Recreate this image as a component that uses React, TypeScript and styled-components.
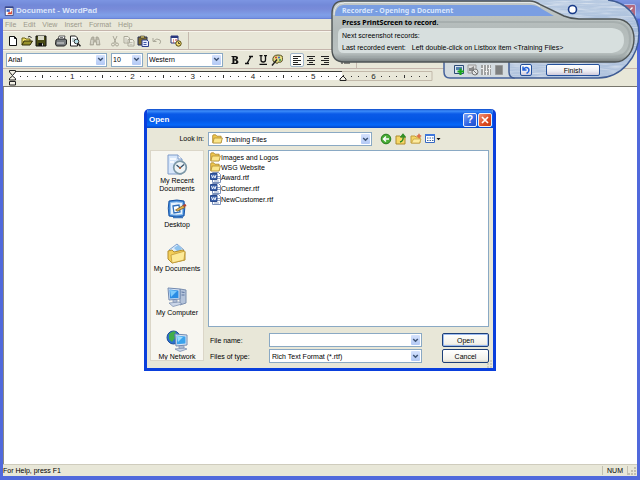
import React from "react";
import styled, { createGlobalStyle, css } from "styled-components";

const Global = createGlobalStyle`
  * { box-sizing: border-box; }
  html, body { margin: 0; height: 100%; }
  body { overflow: hidden; }
  body, button, input, select { font-family: "Liberation Sans", Arial, sans-serif; font-size: 7px; line-height: 9px; color: #000; }
  button, input, select { margin: 0; padding: 0; border: 0; background: none; border-radius: 0; }
`;

const face = "#e8e7d8";
const fieldLine = "#8aa9c4";

/* ---------- main window ---------- */
const Window = styled.main`
  min-height: 100vh;
  display: flex;
  flex-direction: column;
  background: ${face};
  border: solid #5069dc;
  border-width: 0 3px 4px;
`;
const TitleBar = styled.header`
  display: flex;
  align-items: center;
  gap: 2px;
  height: 19px;
  margin: 0 -3px;
  padding: 2px 4px 0;
  background: linear-gradient(#7c95e2 0, #7289d8 5px, #788bd9 9px, #7f9fe8 15px, #7693e2 18px, #5c74cf 19px);
`;
const WindowTitle = styled.h1`
  flex: 1;
  margin: 0;
  font-size: 8px;
  line-height: 10px;
  color: #dce6fb;
`;
const CloseGhost = styled.button`
  width: 13px;
  height: 13px;
  display: grid;
  place-items: center;
  border: 1px solid #b6bdea;
  border-radius: 2px;
  background: #b36a80;
`;
const MenuBar = styled.nav`
  display: flex;
  gap: 7px;
  height: 12px;
  padding: 0 2px;
  align-items: center;
  border-bottom: 1px solid #c5b5ac;
`;
const MenuButton = styled.button`
  color: #9b998b;
`;
const Bar = styled.div`
  display: flex;
  align-items: center;
  height: 19px;
  padding: 0 3px;
  border-top: 1px solid #f7f5ec;
  border-bottom: 1px solid #c5b5ac;
`;
const Group = styled.div<{ $after?: number }>`
  display: flex;
  margin-right: ${(p) => p.$after ?? 6}px;
`;
const Tool = styled.button<{ $on?: boolean; $size?: number }>`
  width: ${(p) => p.$size ?? 14}px;
  height: 14px;
  display: grid;
  place-items: center;
  ${(p) => p.$on && css`background: #fbfbf8; border: 1px solid #9fb4c8; border-radius: 2px;`}
  svg { display: block; }
`;
const Divider = styled.span`
  width: 1px;
  align-self: stretch;
  background: #c5b9ae;
`;
const RulerArea = styled.div`
  height: 18px;
  padding: 1px 0 0 5px;
  border-bottom: 1px solid #77756c;
  overflow: hidden;
  svg { display: block; }
`;
const Page = styled.section`
  flex: 1;
  background: #fff;
  border-left: 1px solid #8d8b80;
`;
const StatusBar = styled.footer`
  display: flex;
  align-items: center;
  height: 12px;
  border-top: 1px solid #cfccbd;
`;
const StatusText = styled.span`
  flex: 1;
`;
const NumCell = styled.span`
  padding: 0 4px;
  border: solid #c3c0b1;
  border-width: 0 1px;
`;

/* ---------- combo boxes ---------- */
const ComboFrame = styled.div<{ $w?: number; $grow?: boolean; $after?: number }>`
  display: flex;
  ${(p) => (p.$grow ? "flex: 1;" : `width: ${p.$w}px;`)}
  height: 14px;
  margin-right: ${(p) => p.$after ?? 0}px;
  align-items: center;
  background: #fff;
  border: 1px solid ${fieldLine};
`;
const Picker = styled.select<{ $inset?: number }>`
  appearance: none;
  flex: 1;
  min-width: 0;
  height: 12px;
  padding-left: ${(p) => p.$inset ?? 1}px;
  outline: none;
`;
const FileInput = styled.input`
  flex: 1;
  min-width: 0;
  height: 12px;
  padding-left: 2px;
  outline: none;
`;
const ArrowCap = styled.span`
  width: 9px;
  height: 10px;
  margin: 1px;
  display: grid;
  place-items: center;
  border-radius: 1px;
  background: linear-gradient(#d5e2fd, #b3c9f5);
  pointer-events: none;
`;
const LeadIcon = styled.span`
  display: flex;
  padding-left: 3px;
`;
const ArrowSvg = () => (
  <svg width="7" height="5" viewBox="0 0 7 5"><path d="M1.2 1l2.3 2.3L5.8 1" fill="none" stroke="#3f5576" strokeWidth="1.5" /></svg>
);
type ComboProps = { label?: string; id?: string; value: string; w?: number; grow?: boolean; after?: number; inset?: number; children?: React.ReactNode };
const Combo = ({ label, id, value, w, grow, after, inset, children }: ComboProps) => (
  <ComboFrame $w={w} $grow={grow} $after={after}>
    {children}
    <Picker aria-label={label} id={id} defaultValue={value} $inset={inset}><option>{value}</option></Picker>
    <ArrowCap><ArrowSvg /></ArrowCap>
  </ComboFrame>
);

/* ---------- toolbar icons ---------- */
const Ico = ({ children, s = 12 }: { children: React.ReactNode; s?: number }) => (
  <svg width={s} height={s} viewBox="0 0 12 12" fill="none">{children}</svg>
);
const AppIcon = () => (
  <Ico s={10}><path d="M1.500 1h9.500v10.500H1.500z" fill="#fff" stroke="#303b78" /><path d="M1.500 1h9.500v1.500H1.500z" fill="#33458e" /><path d="M3 4h4v3H3z" fill="#3b66c8" /><path d="M4 10l2-3 1.500 1L9.500 5v5z" fill="#d8452f" /><path d="M8 4h2" stroke="#e0a33a" /></Ico>
);
const NewIcon = () => <Ico><path d="M2.500 1.500h5l2 2v7h-7z" fill="#fff" stroke="#111" /><path d="M7.500 1.500v2h2" stroke="#111" /></Ico>;
const OpenIcon = () => <Ico><path d="M1 10V3h3l1 1h4v2" fill="#f3e26a" stroke="#6b6010" /><path d="M1 10l2-4h8.500l-2.500 4z" fill="#97902c" stroke="#2f2b06" /><path d="M7 2q2-2 3.500 1" stroke="#222" /></Ico>;
const SaveIcon = () => <Ico><path d="M1 1h10v10H1z" fill="#4b4d16" stroke="#111" /><path d="M3 1h6v4H3z" fill="#d9dac8" /><path d="M3.500 8h5v3h-5z" fill="#111" /><path d="M7 8.500h1v2H7z" fill="#ddd" /></Ico>;
const PrintIcon = () => <Ico><path d="M3 5l1-4h6L9 5z" fill="#fff" stroke="#333" strokeWidth=".8" /><path d="M1 5l1.500-1h8L11.500 5v4l-2 2h-8L.5 9z" fill="#777b7e" stroke="#222" /><path d="M2 8h7" stroke="#ddd" /><path d="M5 2.500h3" stroke="#777" /></Ico>;
const PreviewIcon = () => <Ico><path d="M1.500 1h5l2 2v8h-7z" fill="#fff" stroke="#222" /><path d="M3 4h3M3 6h2" stroke="#8aa" /><circle cx="7.500" cy="6.500" r="2.300" fill="#b9e0e8" stroke="#333" /><path d="M9 8.500l2.500 2.800" stroke="#222" strokeWidth="1.500" /></Ico>;
const FindIcon = () => <Ico><path d="M2 4l1-2h2v3h2V2h2l1 2 1 6H7.500V7h-3v3H1z" fill="#b9b7a8" stroke="#a09e90" strokeWidth=".7" /><path d="M3 5v4M9 5v4" stroke="#efeee4" /></Ico>;
const CutIcon = () => <Ico><path d="M4 1l3 7M8 1L5 8" stroke="#aaa899" /><circle cx="4" cy="9.500" r="1.500" stroke="#aaa899" /><circle cx="8" cy="9.500" r="1.500" stroke="#aaa899" /></Ico>;
const CopyIcon = () => <Ico><path d="M1 1.500h4l1.500 1.500v5H1zM5 4.500h4.500L11 6v5H5z" fill="#efede2" stroke="#aaa899" /><path d="M2 4h2M2 6h2M6.500 7.500h3M6.500 9.300h3" stroke="#b4b2a4" strokeWidth=".8" /></Ico>;
const PasteIcon = () => <Ico><path d="M1 2h9v8H1z" fill="#7d6a2c" stroke="#262f55" /><path d="M3.500 1h4v2h-4z" fill="#d8c569" stroke="#333" strokeWidth=".6" /><path d="M5 5h5l1.500 1.500v5H5z" fill="#e8edff" stroke="#2c3f8c" /><path d="M6.500 7.500h3M6.500 9.500h3" stroke="#4058a8" /></Ico>;
const UndoIcon = () => <Ico><path d="M2 3v3.500h3.500M2.500 6Q6 2.500 9 5q1.500 1.800-.5 4" stroke="#aaa899" /></Ico>;
const DateIcon = () => <Ico><path d="M1 1h7v7H1z" fill="#fff" stroke="#28367e" /><path d="M1 1h7v2H1z" fill="#28367e" /><path d="M3 5h1M5 5h2M3 7h1" stroke="#c0372d" /><circle cx="8.500" cy="8.500" r="2.700" fill="#f2dd72" stroke="#54480f" /><path d="M8.500 7v1.500H10" stroke="#222" strokeWidth=".8" /></Ico>;
const BoldIcon = () => <Ico><path d="M2.500 2h4.200c3 0 3 3.400.6 3.900 3 .4 2.800 4.100-.5 4.100H2.500V9h1V3h-1zM5.400 3v2.300c2 .1 2-2.300 0-2.300m0 3.400V9c2.400.1 2.400-2.700 0-2.600" fill="#111" fillRule="evenodd" /></Ico>;
const ItalicIcon = () => <Ico><path d="M6 2.500h4M2 9.500h4M8 2.500l-4 7" stroke="#111" strokeWidth="1.400" /></Ico>;
const UnderIcon = () => <Ico><path d="M2.500 1.700h3M7 1.700h3M4 1.500v4.500q0 2 2.200 2T8.500 6V1.500M2.500 10.300h7.500" stroke="#111" strokeWidth="1.300" /></Ico>;
const PaletteIcon = () => <Ico><path d="M2 7Q1 1 7 1t4.500 4.500Q11 9 7.500 8 7 10 5 9z" fill="#e5da83" stroke="#4d4a20" /><circle cx="5" cy="3.500" r="1" fill="#c7372d" /><circle cx="8" cy="3.500" r="1" fill="#2c62c4" /><circle cx="9" cy="6" r="1" fill="#2d9451" /><path d="M1 11.500l5-6" stroke="#222" strokeWidth="1.400" /></Ico>;
const AlignIcon = ({ d }: { d: string }) => <Ico><path d={d} stroke="#222" strokeWidth="1" /></Ico>;

const ruler = Array.from({ length: 55 }, (_, i) => i + 1);
const Ruler = () => (
  <svg width="425" height="16" viewBox="0 0 425 16">
    <path d="M4 2h330v8H4z" fill="#fff" />
    <path d="M4 1.500h330" stroke="#3d3c37" />
    <path d="M334 1.500h90v9h-90" fill="none" stroke="#c2b9aa" />
    {ruler.map((i) => {
      const x = 4 + i * 7.53;
      if (i % 8 === 0) return <text key={i} x={x} y="9" textAnchor="middle" fontSize="8" fill="#222">{i / 8}</text>;
      return <path key={i} d={i % 4 === 0 ? `M${Math.round(x)}.5 5v3` : `M${Math.round(x)} 6.500h1`} stroke="#333" />;
    })}
    <path d="M1.500.5h6v1.500l-3 3.500-3-3.500zM4.500 6l3 2.500v1.500h-6V8.500zM1.500 11.500h6v3.500h-6z" fill="#f4f2e7" stroke="#222" />
    <path d="M335 6l3 3v1.500h-6V9z" fill="#f4f2e7" stroke="#222" />
  </svg>
);

/* ---------- recorder panel ---------- */
const Recorder = styled.aside`
  position: absolute;
  top: 0;
  right: 0;
  width: 309px;
`;
const Backdrop = styled.svg`
  position: absolute;
  top: 0;
  left: 0;
`;
const RecContent = styled.div`
  position: relative;
  display: flex;
  flex-direction: column;
  padding: 5px 11px 0;
`;
const RecTitle = styled.h2`
  margin: 0;
  font-family: "Noto Sans", "Liberation Sans", sans-serif;
  font-size: 7px;
  line-height: 11px;
  color: #d9e6fc;
`;
const RecLead = styled.strong`
  font-family: "Noto Sans", "Liberation Sans", sans-serif;
  line-height: 14px;
`;
const RecLine = styled.div`
  display: flex;
  gap: 6px;
  line-height: 12px;
  white-space: nowrap;
`;
const RecTools = styled.div`
  display: flex;
  align-items: center;
  height: 16px;
  margin: 8px 0 0 110px;
`;
const RecButton = styled.button<{ $w: number; $before: number }>`
  width: ${(p) => p.$w}px;
  height: 12px;
  margin-left: ${(p) => p.$before}px;
  display: grid;
  place-items: center;
  border: 1px solid #24509a;
  border-radius: 2px;
  background: linear-gradient(#fff, #eeedf3 60%, #cfcadb);
`;
const RecorderPanel = () => (
  <Recorder aria-label="Recorder">
    <Backdrop width="309" height="81" viewBox="0 0 309 81" aria-hidden="true">
      <defs>
        <linearGradient id="metal" x1="0" y1="0" x2="0" y2="1">
          <stop offset="0" stopColor="#b9cbe2" /><stop offset=".5" stopColor="#a3b9d8" /><stop offset="1" stopColor="#b4c6df" />
        </linearGradient>
        <linearGradient id="shell" x1="0" y1="0" x2="0" y2="1">
          <stop offset="0" stopColor="#c3c9c8" /><stop offset=".45" stopColor="#b3bbba" /><stop offset=".85" stopColor="#b9c1c0" /><stop offset=".93" stopColor="#9ba3a3" /><stop offset="1" stopColor="#767d7e" />
        </linearGradient>
        <filter id="brush" x="0" y="0" width="1" height="1">
          <feTurbulence type="fractalNoise" baseFrequency=".05 .6" numOctaves="2" seed="4" />
          <feColorMatrix values="0 0 0 0 1  0 0 0 0 1  0 0 0 0 1  2.400 0 0 0 -1" />
          <feComposite in2="SourceGraphic" operator="in" />
        </filter>
      </defs>
      <path d="M113 58v14q0 6 6 6h64V58z" fill="#d3dbe0" stroke="#46639b" strokeWidth="1.500" />
      <path d="M190 0h87c18 2 31 16 31 33 0 24-18 45-41 45h-83q-6 0-6-6V50z" fill="url(#metal)" />
      <path d="M190 0h87c18 2 31 16 31 33 0 24-18 45-41 45h-83q-6 0-6-6V50z" fill="#fff" filter="url(#brush)" opacity=".45" />
      <path d="M277 0c18 2 31 16 31 33 0 24-18 45-41 45h-83q-6 0-6-6V58" fill="none" stroke="#3f5c94" strokeWidth="1.500" />
      <path d="M12 1h187q5 0 11 4l23 11q7 3 15 3h37c12 0 18 9 18 20s-7 23-19 23H13Q1 62 1 49V14Q1 1 12 1z" fill="url(#shell)" stroke="#4e5455" strokeWidth="1.400" />
      <path d="M13 2.500h186q5 0 10 4M3 15Q3 3 13 3" fill="none" stroke="#e4e8e8" />
      <path d="M4 16q0-10 8-11h188q6 0 11 4l12 7z" fill="#7a9ee2" />
      <path d="M38 22h245q16 1 16 17 0 17-16 18H14" fill="none" stroke="#a0a8a8" strokeWidth="2" opacity=".7" />
      <path d="M13 28h268q12 1 12 12t-12 13H13q-6 0-6-6V34q0-6 6-6z" fill="#d7dfde" />
      <circle cx="241.500" cy="9.500" r="4" fill="#fff" stroke="#183a88" strokeWidth="1.600" />
    </Backdrop>
    <RecContent>
      <RecTitle>Recorder - Opening a Document</RecTitle>
      <RecLead>Press PrintScreen to record.</RecLead>
      <RecLine>Next screenshot records:</RecLine>
      <RecLine><span>Last recorded event:</span><span>Left double-click on Listbox item &lt;Training Files&gt;</span></RecLine>
      <RecTools>
        <Tool aria-label="Add screen"><svg width="12" height="12" viewBox="0 0 12 12"><path d="M1.500 1.500h9v8h-9z" fill="#d8e4ee" stroke="#2d4b76" /><path d="M3 3h6v3H3z" fill="#547fae" /><path d="M4.500 7.500h6.500M7.500 4.500v6.500" stroke="#18a51d" strokeWidth="2.200" /></svg></Tool>
        <Tool aria-label="Mute" $size={13}><svg width="12" height="12" viewBox="0 0 12 12" fill="none"><path d="M1 1h8v8H1z" fill="#ddd" stroke="#999" /><path d="M2 4h2l3-2v7L4 7H2z" fill="#888" /><circle cx="8" cy="8" r="3" fill="#e4e6e6" stroke="#777" /><path d="M6 6l4 4" stroke="#777" /></svg></Tool>
        <Tool aria-label="Levels" $size={13}><svg width="12" height="12" viewBox="0 0 12 12"><path d="M1 1h10v10H1z" fill="#9fa1a1" /><path d="M3.500 1v10M6.500 1v10M9.500 1v10M1 4.500h3M5 7.500h3M8 4.500h3" stroke="#f0f0f0" /></svg></Tool>
        <Tool aria-label="Stop"><svg width="8" height="10" viewBox="0 0 8 10"><path d="M.5.5h7v9h-7z" fill="#7e8080" stroke="#999b9b" /></svg></Tool>
        <RecButton $w={12} $before={14} aria-label="Undo"><svg width="8" height="8" viewBox="0 0 8 8" fill="none"><path d="M1 .5V4h3.500M1.500 3.500Q4 0 6.500 2.500 8 5.500 4.500 7.500" stroke="#2462d8" strokeWidth="1.500" /></svg></RecButton>
        <RecButton $w={54} $before={14}>Finish</RecButton>
      </RecTools>
    </RecContent>
  </Recorder>
);

/* ---------- open dialog ---------- */
const DialogLayer = styled.div`
  position: absolute;
  inset: 0;
  display: grid;
  place-items: center;
  pointer-events: none;
`;
const Dialog = styled.section`
  width: 352px;
  display: flex;
  flex-direction: column;
  border: solid #0a3fdc;
  border-width: 0 3px 3px;
  border-radius: 5px 5px 0 0;
  background: ${face};
  overflow: hidden;
  pointer-events: auto;
`;
const DialogTitle = styled.header`
  display: flex;
  align-items: center;
  gap: 1px;
  height: 19px;
  margin: 0 -3px;
  padding: 2px 4px 0 5px;
  background: linear-gradient(#0c48c8 0, #3c8cfa 2px, #0a5ae8 5px, #0356e4 11px, #0668fa 16px, #0344c4 19px);
`;
const DialogName = styled.h2`
  flex: 1;
  margin: 0;
  font-size: 8px;
  line-height: 10px;
  color: #fff;
`;
const Caption = styled.button<{ $close?: boolean }>`
  width: 14px;
  height: 14px;
  display: grid;
  place-items: center;
  border: 1px solid #e8eefc;
  border-radius: 2px;
  background: ${(p) => (p.$close ? "linear-gradient(135deg,#ef9378,#dc4a22 60%,#c23c14)" : "linear-gradient(135deg,#7ba0f5,#2d62e2 60%,#2350cc)")};
  color: #fff;
  font-size: 10px;
  line-height: 10px;
  font-weight: bold;
`;
const DialogBody = styled.div`
  position: relative;
  display: grid;
  grid-template-columns: 54px 1fr;
  column-gap: 4px;
  row-gap: 4px;
  padding: 4px 4px 5px 3px;
`;
const LookLabel = styled.label`
  text-align: right;
  line-height: 14px;
`;
const LookRow = styled.div`
  display: flex;
  align-items: center;
`;
const NavTools = styled.div`
  display: flex;
  align-items: center;
  width: 117px;
  padding-left: 7px;
`;
const Rail = styled.nav`
  display: flex;
  flex-direction: column;
  height: 211px;
  padding-top: 3px;
  overflow: hidden;
  background: #f7f6f0;
  border: 1px solid #dbd6c8;
`;
const Place = styled.button`
  height: 44px;
  flex: none;
  display: flex;
  flex-direction: column;
  align-items: center;
  justify-content: flex-start;
  line-height: 8px;
  svg { display: block; margin-bottom: 1px; flex: none; }
`;
const RightSide = styled.div`
  display: flex;
  flex-direction: column;
  min-width: 0;
`;
const FilePane = styled.div`
  height: 177px;
  padding: 1px;
  background: #fff;
  border: 1px solid ${fieldLine};
`;
const FileRows = styled.ul`
  display: grid;
  grid-template-rows: repeat(5, 1fr);
  height: 53px;
  margin: 0;
  padding: 0;
  list-style: none;
`;
const FileItem = styled.li`
  display: flex;
  align-items: center;
`;
const FieldRow = styled.div<{ $top: number }>`
  display: flex;
  align-items: center;
  margin-top: ${(p) => p.$top}px;
`;
const FieldLabel = styled.label`
  width: 61px;
  padding-left: 2px;
`;
const DlgButton = styled.button<{ $main?: boolean }>`
  width: 47px;
  height: 14px;
  margin-left: 20px;
  border: 1px solid #1d3f78;
  border-radius: 2px;
  background: linear-gradient(#fff, #f2f1ea 80%, #dcd8ca);
  ${(p) => p.$main && "box-shadow: inset 0 0 0 1px #9dbcf0;"}
`;
const Grip = styled.svg`
  position: absolute;
  right: 0;
  bottom: 0;
`;

const FolderIcon = () => (
  <svg width="11" height="10" viewBox="0 0 11 10"><path d="M.7 8.500V1.800q0-1 1-1h2l1.200 1.400h4.200v6.500H.7z" fill="#f0c84e" stroke="#a8832a" strokeWidth=".8" /><path d="M2.200 4h8.200L9 9H.9z" fill="#fbe68c" stroke="#b18d30" strokeWidth=".8" /></svg>
);
const RtfIcon = () => (
  <svg width="11" height="11" viewBox="0 0 11 11"><path d="M2.500.5h6l2 2v8h-8z" fill="#fff" stroke="#7b91bb" /><path d="M7 4.500h3M7 6.500h3M4 9h5" stroke="#8fa3c8" /><path d="M.5 1.500h6.500v6H.5z" fill="#3b61ab" stroke="#2b4a8c" /><path d="M1.500 3l1 3 1.200-2.500L5 6l1-3" fill="none" stroke="#fff" strokeWidth=".9" /></svg>
);
const RecentArt = () => (
  <svg width="22" height="22" viewBox="0 0 22 22"><path d="M2 1h10l4 4v15H2z" fill="#d7e6fa" stroke="#7f9bc9" /><path d="M12 1v4h4" fill="#fff" stroke="#7f9bc9" /><path d="M4 5h6M4 8h4" stroke="#fff" strokeWidth="1.500" /><circle cx="14" cy="13.500" r="6.300" fill="#eef4f6" stroke="#7c97a6" strokeWidth="1.700" /><path d="M10.500 11l3.500 3 4-3.500" fill="none" stroke="#35506a" strokeWidth="1.300" /><circle cx="14" cy="14" r="1" fill="#c65a24" /></svg>
);
const DesktopArt = () => (
  <svg width="22" height="22" viewBox="0 0 22 22"><path d="M3 3q8-2 15 0 1.500 8 0 15-7 2-15 0-1.500-8 0-15z" fill="#3d87d8" stroke="#1b55a5" /><path d="M4.500 4.500q6-1 12 0v12q-6 1-12 0z" fill="#e8f3fd" stroke="#8ebcec" /><path d="M7 8l6-1 1 7-6 1z" fill="#fff" stroke="#2f6fbb" strokeWidth="1.300" /><path d="M9.500 12l7.500-4.500 2 2-7.500 3.500z" fill="#e7b24a" stroke="#6b531e" strokeWidth=".7" /><path d="M16.500 7l3-1 1 2-2 1z" fill="#b9432f" /><path d="M7 19.500h10" stroke="#3a76bd" strokeWidth="1.500" /></svg>
);
const DocumentsArt = () => (
  <svg width="22" height="22" viewBox="0 0 22 22"><path d="M3 8l8-6 7 6-6 8z" fill="#dcebfb" stroke="#7da0cf" /><path d="M8 6l4 4 4-3-4-4z" fill="#8ec3ee" /><path d="M2 9l4-1 2 2 9-2 2 2v8L6 21l-4-4z" fill="#f3ce59" stroke="#b38d2c" /><path d="M5 13l14-4-1 9L6 21z" fill="#fdea98" stroke="#c19b37" strokeWidth=".8" /></svg>
);
const ComputerArt = () => (
  <svg width="22" height="22" viewBox="0 0 22 22"><path d="M14 3l6 1v13l-6 2z" fill="#b4c3da" stroke="#7b8eae" /><path d="M15.500 6l3 .5M15.500 9h3" stroke="#5d75a0" /><path d="M2 2l12 1v10L3 14z" fill="#d9e5f5" stroke="#7189b0" /><path d="M3.500 3.500L12.500 4.500v7.500l-8.500.5z" fill="#2a8ce4" /><path d="M4 4l7 1-6 6z" fill="#7cc9fb" /><path d="M7 14h4v2H7zM3 17l10-1 3 2-9 2.500z" fill="#cbd6e8" stroke="#8093b2" strokeWidth=".8" /></svg>
);
const NetworkArt = () => (
  <svg width="22" height="22" viewBox="0 0 22 22"><circle cx="7.500" cy="7.500" r="6.500" fill="#2b71cf" stroke="#1d4c98" /><path d="M3 4q4-4 7-2l-2 3 1 3-3 4-3-3z" fill="#41ad4a" /><path d="M9 4l12 1v10l-11 1z" fill="#d9e5f5" stroke="#7189b0" /><path d="M10.500 5.500l9 1V13.500l-8.500.8z" fill="#3ba3ec" /><path d="M11 6l6 1-5 5z" fill="#9cdafc" /><path d="M13 16h5v2h-5zM9 19l9-1 3 1-7 2.500z" fill="#cbd6e8" stroke="#8093b2" strokeWidth=".8" /></svg>
);

const OpenDialog = () => (
  <DialogLayer>
    <Dialog role="dialog" aria-label="Open">
      <DialogTitle>
        <DialogName>Open</DialogName>
        <Caption aria-label="Help">?</Caption>
        <Caption $close aria-label="Close"><svg width="10" height="10" viewBox="0 0 10 10"><path d="M2 2l6 6M8 2L2 8" stroke="#fff" strokeWidth="1.700" /></svg></Caption>
      </DialogTitle>
      <DialogBody>
        <LookLabel htmlFor="look">Look in:</LookLabel>
        <LookRow>
          <Combo id="look" value="Training Files" grow inset={2}>
            <LeadIcon><FolderIcon /></LeadIcon>
          </Combo>
          <NavTools>
            <Tool aria-label="Back"><Ico><circle cx="6" cy="6" r="4.800" fill="#49ad36" stroke="#267a1c" /><path d="M9 6H4M6 3.500L3.500 6 6 8.500" fill="none" stroke="#fff" strokeWidth="1.500" /></Ico></Tool>
            <Tool aria-label="Up one level" $size={15}><Ico><path d="M1 3h4l1 1h4v7H1z" fill="#f6d766" stroke="#ad8a2d" /><path d="M5 9q4-1 3-6M5.500 4.500L8 1.500l2.500 3" stroke="#2b8b22" strokeWidth="1.500" /></Ico></Tool>
            <Tool aria-label="New folder" $size={15}><Ico><path d="M1 3h4l1 1h4v6H1z" fill="#f6d766" stroke="#c09b3a" /><path d="M1.500 10l2-4H11l-1.500 4z" fill="#fdeba0" stroke="#c09b3a" strokeWidth=".7" /><path d="M9 .8v4.400M6.800 3h4.400" stroke="#de6b45" strokeWidth="1.500" /></Ico></Tool>
            <Tool aria-label="Views" $size={19}><svg width="17" height="12" viewBox="0 0 17 12"><path d="M1.500 1.500h9v8h-9z" fill="#fff" stroke="#3568c4" /><path d="M1 1h10v2H1z" fill="#3f78dc" /><path d="M3 5h1.500M5.500 5H7M8 5h1.500M3 7.500h1.500M5.500 7.500H7M8 7.500h1.500" stroke="#41689c" /><path d="M12.500 5h4l-2 2.300z" fill="#111" /></svg></Tool>
          </NavTools>
        </LookRow>
        <Rail aria-label="Places">
          <Place><RecentArt />My Recent<br />Documents</Place>
          <Place><DesktopArt />Desktop</Place>
          <Place><DocumentsArt />My Documents</Place>
          <Place><ComputerArt />My Computer</Place>
          <Place><NetworkArt />My Network</Place>
        </Rail>
        <RightSide>
          <FilePane>
            <FileRows aria-label="Files">
              <FileItem><FolderIcon />Images and Logos</FileItem>
              <FileItem><FolderIcon />WSG Website</FileItem>
              <FileItem><RtfIcon />Award.rtf</FileItem>
              <FileItem><RtfIcon />Customer.rtf</FileItem>
              <FileItem><RtfIcon />NewCustomer.rtf</FileItem>
            </FileRows>
          </FilePane>
          <FieldRow $top={6}>
            <FieldLabel htmlFor="fname">File name:</FieldLabel>
            <ComboFrame $grow><FileInput id="fname" /><ArrowCap><ArrowSvg /></ArrowCap></ComboFrame>
            <DlgButton $main>Open</DlgButton>
          </FieldRow>
          <FieldRow $top={2}>
            <FieldLabel htmlFor="ftype">Files of type:</FieldLabel>
            <Combo id="ftype" value="Rich Text Format (*.rtf)" grow inset={2} />
            <DlgButton>Cancel</DlgButton>
          </FieldRow>
        </RightSide>
        <Grip width="8" height="8" viewBox="0 0 8 8"><path d="M5 1h2M5 4h2M2 4h2M5 7h2M2 7h2" stroke="#b9b5a3" /></Grip>
      </DialogBody>
    </Dialog>
  </DialogLayer>
);

export default function App() {
  return (
    <>
      <Global />
      <Window>
        <TitleBar>
          <AppIcon />
          <WindowTitle>Document - WordPad</WindowTitle>
          <CloseGhost aria-label="Close window"><svg width="9" height="9" viewBox="0 0 9 9"><path d="M1.500 1.500l6 6M7.500 1.500l-6 6" stroke="#fff" strokeWidth="1.400" /></svg></CloseGhost>
        </TitleBar>
        <MenuBar>
          {["File", "Edit", "View", "Insert", "Format", "Help"].map((m) => <MenuButton key={m}>{m}</MenuButton>)}
        </MenuBar>
        <Bar>
          <Group><Tool aria-label="New"><NewIcon /></Tool><Tool aria-label="Open file"><OpenIcon /></Tool><Tool aria-label="Save"><SaveIcon /></Tool></Group>
          <Group><Tool aria-label="Print"><PrintIcon /></Tool><Tool aria-label="Print preview"><PreviewIcon /></Tool></Group>
          <Group><Tool aria-label="Find"><FindIcon /></Tool></Group>
          <Group $after={5}><Tool aria-label="Cut"><CutIcon /></Tool><Tool aria-label="Copy"><CopyIcon /></Tool><Tool aria-label="Paste"><PasteIcon /></Tool><Tool aria-label="Undo edit"><UndoIcon /></Tool></Group>
          <Group $after={5}><Tool aria-label="Date and time"><DateIcon /></Tool></Group>
          <Divider />
        </Bar>
        <Bar>
          <Combo label="Font" value="Arial" w={101} after={4} />
          <Combo label="Font size" value="10" w={32} after={4} />
          <Combo label="Script" value="Western" w={76} after={5} />
          <Group>
            <Tool aria-label="Bold"><BoldIcon /></Tool><Tool aria-label="Italic"><ItalicIcon /></Tool><Tool aria-label="Underline"><UnderIcon /></Tool><Tool aria-label="Color"><PaletteIcon /></Tool>
          </Group>
          <Group>
            <Tool $on aria-label="Align left"><AlignIcon d="M2 2.500h8M2 4.500h5M2 6.500h8M2 8.500h5M2 10.500h8" /></Tool>
            <Tool aria-label="Center"><AlignIcon d="M2 2.500h8M4 4.500h4M2 6.500h8M4 8.500h4M2 10.500h8" /></Tool>
            <Tool aria-label="Align right"><AlignIcon d="M2 2.500h8M5 4.500h5M2 6.500h8M5 8.500h5M2 10.500h8" /></Tool>
          </Group>
          <Group $after={4}><Tool aria-label="Bullets"><AlignIcon d="M2 3h2M5 3h6M2 6h2M5 6h6M2 9h2M5 9h6" /></Tool></Group>
          <Divider />
        </Bar>
        <RulerArea><Ruler /></RulerArea>
        <Page aria-label="Document" />
        <StatusBar>
          <StatusText>For Help, press F1</StatusText>
          <NumCell>NUM</NumCell>
          <svg width="9" height="9" viewBox="0 0 9 9"><path d="M6 2h2M3 5h2M6 5h2M0 8h2M3 8h2M6 8h2" stroke="#b5b2a2" strokeWidth="1.500" /></svg>
        </StatusBar>
      </Window>
      <RecorderPanel />
      <OpenDialog />
    </>
  );
}
